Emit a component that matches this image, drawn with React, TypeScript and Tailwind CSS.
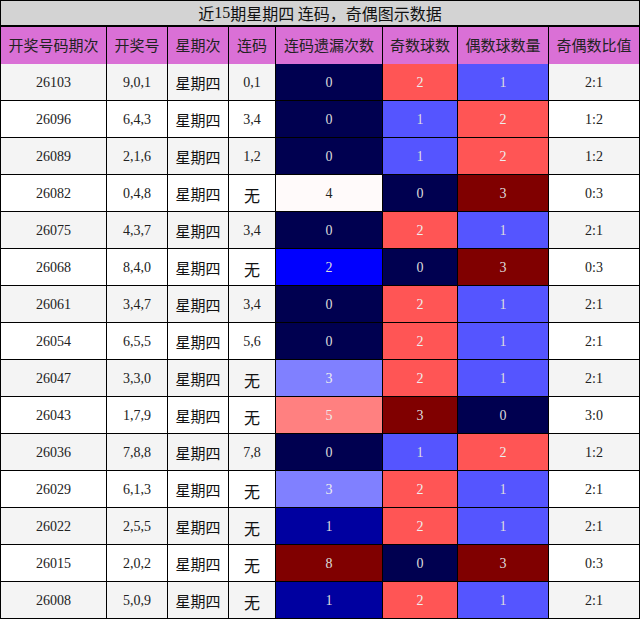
import React from "react";

const HEADERS = ["开奖号码期次", "开奖号", "星期次", "连码", "连码遗漏次数", "奇数球数", "偶数球数量", "奇偶数比值"];

type Row = [string, string, string, number, number, number, string];

const ROWS: Row[] = [
  ["26103", "9,0,1", "0,1", 0, 2, 1, "2:1"],
  ["26096", "6,4,3", "3,4", 0, 1, 2, "1:2"],
  ["26089", "2,1,6", "1,2", 0, 1, 2, "1:2"],
  ["26082", "0,4,8", "无", 4, 0, 3, "0:3"],
  ["26075", "4,3,7", "3,4", 0, 2, 1, "2:1"],
  ["26068", "8,4,0", "无", 2, 0, 3, "0:3"],
  ["26061", "3,4,7", "3,4", 0, 2, 1, "2:1"],
  ["26054", "6,5,5", "5,6", 0, 2, 1, "2:1"],
  ["26047", "3,3,0", "无", 3, 2, 1, "2:1"],
  ["26043", "1,7,9", "无", 5, 3, 0, "3:0"],
  ["26036", "7,8,8", "7,8", 0, 1, 2, "1:2"],
  ["26029", "6,1,3", "无", 3, 2, 1, "2:1"],
  ["26022", "2,5,5", "无", 1, 2, 1, "2:1"],
  ["26015", "2,0,2", "无", 8, 0, 3, "0:3"],
  ["26008", "5,0,9", "无", 1, 2, 1, "2:1"],
];

// 遗漏次数 colour scale
const MISS: Record<number, string> = {
  0: "bg-[#000050] text-[#dddddd]",
  1: "bg-[#0000a0] text-[#dddddd]",
  2: "bg-[#0000ff] text-[#dddddd]",
  3: "bg-[#8080ff] text-[#eeeeee]",
  4: "bg-[#fffafa] text-[#222222]",
  5: "bg-[#ff8080] text-[#eeeeee]",
  8: "bg-[#800000] text-[#dddddd]",
};

// 球数 colour scale
const COUNT: Record<number, string> = {
  0: "bg-[#000050] text-[#dddddd]",
  1: "bg-[#5555ff] text-[#dddddd]",
  2: "bg-[#ff5555] text-[#eeeeee]",
  3: "bg-[#800000] text-[#dddddd]",
};

const serif = "font-['Liberation_Serif','Noto_Sans_CJK_SC',serif]";
const cjk = "font-['Noto_Sans_CJK_SC','Liberation_Sans',sans-serif]";

export default function App() {
  return (
    <div className="w-[640px] bg-black p-px">
      <div className={`h-[24px] bg-[#d3d3d3] flex items-center justify-center text-[16px] text-[#111] ${cjk}`}>
        近<span className={serif}>15</span>期星期四 连码，奇偶图示数据
      </div>
      <div className="mt-[2px] grid grid-cols-[105px_60px_60px_46px_106px_74px_90px_90px] gap-px auto-rows-[36px]">
        {HEADERS.map((h) => (
          <div key={h} className={`h-[37px] bg-[#da70d6] flex items-center justify-center text-[15px] text-[#222] ${cjk}`}>
            {h}
          </div>
        ))}
        {ROWS.map((r, i) => {
          const bg = i % 2 === 0 ? "bg-[#f4f4f4]" : "bg-white";
          const plain = `${bg} flex items-center justify-center pt-px text-[14px] text-[#222] ${serif}`;
          const han = `${bg} flex items-center justify-center pt-[3px] text-[15px] text-[#111] ${cjk}`;
          return (
            <React.Fragment key={r[0]}>
              <div className={plain}>{r[0]}</div>
              <div className={plain}>{r[1]}</div>
              <div className={han}>星期四</div>
              <div className={r[2] === "无" ? `${han} text-[16px]` : plain}>{r[2]}</div>
              <div className={`${MISS[r[3]]} flex items-center justify-center pt-px text-[14px] ${serif}`}>{r[3]}</div>
              <div className={`${COUNT[r[4]]} flex items-center justify-center pt-px text-[14px] ${serif}`}>{r[4]}</div>
              <div className={`${COUNT[r[5]]} flex items-center justify-center pt-px text-[14px] ${serif}`}>{r[5]}</div>
              <div className={plain}>{r[6]}</div>
            </React.Fragment>
          );
        })}
      </div>
    </div>
  );
}
